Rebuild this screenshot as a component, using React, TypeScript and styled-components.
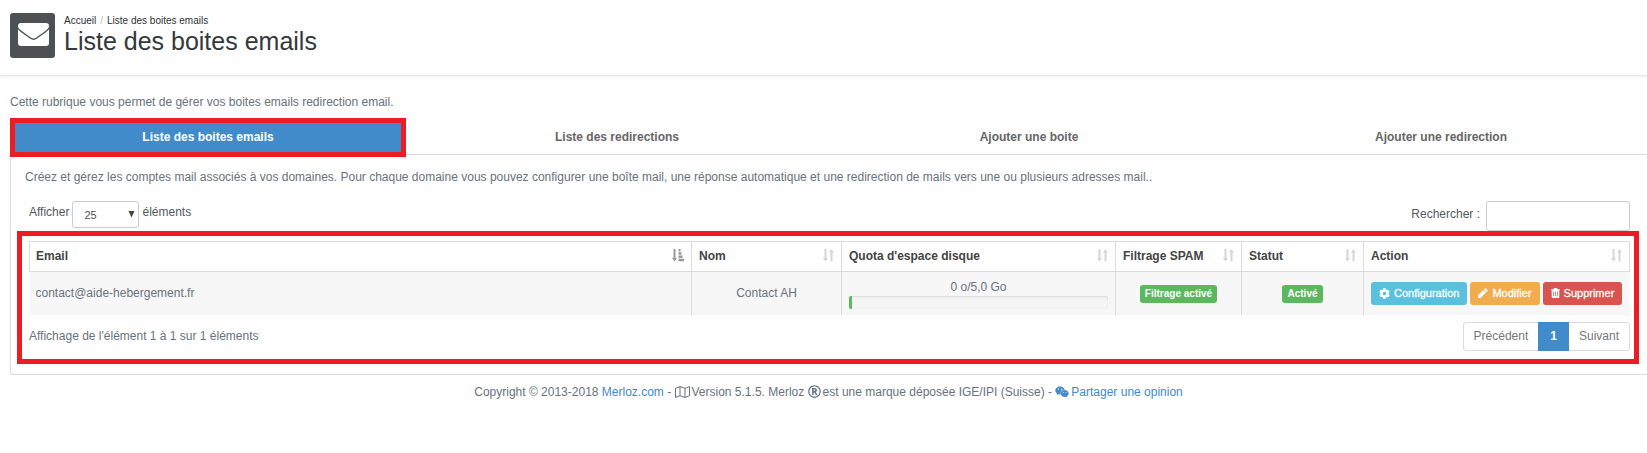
import React from "react";
import styled, { createGlobalStyle } from "styled-components";
import { FaCog, FaWeixin, FaRegRegistered } from "react-icons/fa";

const GlobalStyle = createGlobalStyle`
  * { box-sizing: border-box; }
  body {
    margin: 0;
    background: #fefefe;
    color: #69737c;
    font: 12px/18px "Liberation Sans", Arial, sans-serif;
    overflow-x: hidden;
  }
  p, h1 { margin: 0; }
  input, select, button { font-family: inherit; }
  a { color: #428bca; text-decoration: none; }
`;

const Header = styled.header`
  display: flex;
  gap: 9px;
  height: 76px;
  padding: 13px 10px 0;
  border-bottom: 1px solid #e6e8e9;
  box-shadow: 0 1px 2px #f0f0f0;
`;

const HeaderIcon = styled.div`
  width: 45px;
  height: 45px;
  border-radius: 3px;
  background: #4d5154;
`;

const Breadcrumb = styled.nav`
  display: flex;
  gap: 4px;
  font-size: 10px;
  line-height: 16px;
  color: #bbb;
  a, span { color: #2f3336; }
`;

const Title = styled.h1`
  font-size: 25px;
  line-height: 24px;
  font-weight: 400;
  color: #34383c;
`;

const Main = styled.main`
  padding: 17px 0 0 10px;
`;

const Tabs = styled.div`
  display: grid;
  grid-template-columns: 401fr 412fr 412fr 412fr;
  height: 37px;
  margin-top: 7px;
  border-bottom: 1px solid #ddd;
`;

const Tab = styled.button<{ $active?: boolean }>`
  height: ${(p) => (p.$active ? "39px" : "36px")};
  margin-right: ${(p) => (p.$active ? "5px" : "0")};
  padding: ${(p) => (p.$active ? "0 0 2px" : "2px 0 0")};
  border: ${(p) => (p.$active ? "5px solid #ec1c24" : "0")};
  background: ${(p) => (p.$active ? "#428bca" : "transparent")};
  color: ${(p) => (p.$active ? "#fff" : "#666")};
  font-size: 12px;
  font-weight: 700;
`;

const Panel = styled.section`
  padding: 13px 0 10px 6px;
  border: solid #ddd;
  border-width: 0 0 1px 1px;
  border-radius: 0 0 0 3px;
`;

const Intro = styled.p`
  padding-left: 8px;
`;

const Controls = styled.div`
  display: flex;
  justify-content: space-between;
  align-items: flex-start;
  height: 45px;
  padding: 15px 17px 0 12px;
  color: #555a60;
`;

const Field = styled.label`
  display: flex;
  gap: 3px;
  line-height: 22px;
`;

const SearchField = styled(Field)`
  gap: 6px;
  line-height: 26px;
`;

const SelectBox = styled.span`
  position: relative;
  height: 27px;
  svg {
    position: absolute;
    right: 4px;
    top: 10px;
    pointer-events: none;
  }
`;

const Select = styled.select`
  display: block;
  appearance: none;
  width: 67px;
  height: 27px;
  padding: 0 11px;
  border: 1px solid #ccc;
  border-radius: 3px;
  background: #fff;
  color: #555;
  font-size: 11px;
`;

const SearchInput = styled.input`
  width: 144px;
  height: 30px;
  border: 1px solid #ccc;
  border-radius: 3px;
  background: #fff;
`;

const Highlight = styled.div`
  margin-right: 8px;
  padding: 5px 4px 8px 7px;
  border: 5px solid #ec1c24;
`;

const Table = styled.table`
  width: 100%;
  table-layout: fixed;
  border-collapse: collapse;
`;

const Th = styled.th`
  height: 30px;
  padding: 0 7px 2px 7px;
  border: 1px solid #ddd;
  color: #444;
  text-align: left;
  &:first-child { padding-left: 6px; }
`;

const ThInner = styled.div`
  display: flex;
  align-items: center;
  justify-content: space-between;
`;

const Td = styled.td<{ $left?: boolean }>`
  height: 43px;
  padding: 0 7px;
  background: #f7f7f7;
  text-align: ${(p) => (p.$left ? "left" : "center")};
  & + & { border-left: 1px solid #ddd; }
  &:first-child { padding-left: 6px; }
`;

const Track = styled.div`
  height: 13px;
  border-radius: 2px;
  background: #f5f5f5;
  box-shadow: inset 0 1px 2px rgba(0, 0, 0, 0.12);
`;

const Fill = styled.div`
  width: 3px;
  height: 13px;
  border-radius: 2px 0 0 2px;
  background: #5cb85c;
`;

const Badge = styled.span`
  display: inline-block;
  padding: 0 5px;
  border-radius: 3px;
  background: #5cb85c;
  color: #fff;
  font-size: 10px;
  font-weight: 700;
  line-height: 18px;
`;

const Actions = styled.div`
  display: flex;
  gap: 3px;
`;

const ActionButton = styled.button<{ $bg: string }>`
  display: flex;
  align-items: center;
  justify-content: center;
  gap: 4px;
  height: 23px;
  padding: 0 8px;
  border: 0;
  border-radius: 3px;
  background: ${(p) => p.$bg};
  color: #fff;
  font-size: 11px;
  white-space: nowrap;
  -webkit-text-stroke: 0.3px #fff;
`;

const TableFooter = styled.div`
  display: flex;
  justify-content: space-between;
  padding-top: 7px;
  line-height: 28px;
`;

const Pager = styled.nav`
  display: flex;
  height: 29px;
`;

const PageButton = styled.button<{ $active?: boolean }>`
  padding: 0 ${(p) => (p.$active ? "11px" : "10px")};
  border: 1px solid ${(p) => (p.$active ? "#428bca" : "#ddd")};
  background: ${(p) => (p.$active ? "#428bca" : "#fff")};
  color: ${(p) => (p.$active ? "#fff" : "#777")};
  font-size: 12px;
  font-weight: ${(p) => (p.$active ? 700 : 400)};
  &:first-child { border-right: 0; border-radius: 3px 0 0 3px; }
  &:last-child { border-left: 0; border-radius: 0 3px 3px 0; }
`;

const Footer = styled.footer`
  display: flex;
  justify-content: center;
  align-items: center;
  padding-top: 8px;
  white-space: pre;
  svg { margin-right: 2px; }
`;

const EnvelopeIcon = () => (
  <svg width="45" height="45" viewBox="0 0 45 45">
    <rect x="8" y="10" width="31" height="23" rx="3" fill="#fff" />
    <path
      d="M7.500 14.500Q9 17 11.500 18.700L20 24.700Q22.300 26.300 23.500 26.300T27 24.700L35.500 18.700Q38 17 39.500 14.500"
      fill="none"
      stroke="#4d5154"
      strokeWidth="1.4"
    />
  </svg>
);

const SortIcon = () => (
  <svg width="11" height="13" viewBox="0 0 11 13" fill="#d6d6d6">
    <path d="M1.500 0H3.500V9H5.200L2.500 12.500L0 9H1.500ZM7.500 12.500H9.500V3.500H11L8.500 0L6 3.500H7.500Z" />
  </svg>
);

const SortAscIcon = () => (
  <svg width="12" height="13" viewBox="0 0 12 13" fill="#999">
    <path d="M1.500 0H3.500V9H5L2.500 12.500L0 9H1.500ZM6.500 0H8.500V2.500H6.500ZM6.500 3.300H9.500V5.800H6.500ZM6.500 6.600H10.500V9H6.500ZM6.500 9.800H12V12.300H6.500Z" />
  </svg>
);

const PencilIcon = () => (
  <svg width="10" height="10" viewBox="0 0 10 10" fill="#fff">
    <path d="M6.800.6Q7.400 0 8 .6L9.400 2Q10 2.600 9.400 3.200L8.500 4.100L5.900 1.500ZM5.400 2L8 4.600L2.700 9.900H.1V7.300Z" />
  </svg>
);

const TrashIcon = () => (
  <svg width="9" height="10" viewBox="0 0 9 10" fill="#fff">
    <path
      fillRule="evenodd"
      d="M3 0H6L6.500 1.200H9V2.200H8.300V9Q8.300 10 7.300 10H1.700Q.7 10 .7 9V2.200H0V1.200H2.500ZM2.200 3.500V8.300H2.900V3.500ZM4.200 3.500V8.300H4.900V3.500ZM6.200 3.500V8.300H6.900V3.500Z"
    />
  </svg>
);

const MapIcon = () => (
  <svg width="15" height="12" viewBox="0 0 15 12" fill="none" stroke="#69737c">
    <path d="M.5 2.300L5 .6L10 2.300L14.500.6V9.700L10 11.400L5 9.700L.5 11.400ZM5 .6V9.700M10 2.300V11.400" />
  </svg>
);

const columns: { label: string; width?: number }[] = [
  { label: "Email" },
  { label: "Nom", width: 150 },
  { label: "Quota d'espace disque", width: 274 },
  { label: "Filtrage SPAM", width: 126 },
  { label: "Statut", width: 122 },
  { label: "Action", width: 266 },
];

export default function App() {
  return (
    <>
      <GlobalStyle />
      <Header>
        <HeaderIcon>
          <EnvelopeIcon />
        </HeaderIcon>
        <div>
          <Breadcrumb>
            <a href="#accueil">Accueil</a>/<span>Liste des boites emails</span>
          </Breadcrumb>
          <Title>Liste des boites emails</Title>
        </div>
      </Header>
      <Main>
        <p>Cette rubrique vous permet de gérer vos boites emails redirection email.</p>
        <Tabs>
          <Tab $active>Liste des boites emails</Tab>
          <Tab>Liste des redirections</Tab>
          <Tab>Ajouter une boite</Tab>
          <Tab>Ajouter une redirection</Tab>
        </Tabs>
        <Panel>
          <Intro>
            Créez et gérez les comptes mail associés à vos domaines. Pour chaque domaine vous pouvez configurer une
            boîte mail, une réponse automatique et une redirection de mails vers une ou plusieurs adresses mail..
          </Intro>
          <Controls>
            <Field>
              Afficher
              <SelectBox>
                <Select defaultValue="25">
                  <option>10</option>
                  <option>25</option>
                  <option>50</option>
                </Select>
                <svg width="7" height="7" viewBox="0 0 7 7" fill="#444">
                  <path d="M.5 0H6.500L3.500 6.500Z" />
                </svg>
              </SelectBox>
              éléments
            </Field>
            <SearchField>
              Rechercher :
              <SearchInput type="search" />
            </SearchField>
          </Controls>
          <Highlight>
            <Table>
              <colgroup>
                {columns.map((c) => (
                  <col key={c.label} width={c.width} />
                ))}
              </colgroup>
              <thead>
                <tr>
                  {columns.map((c, i) => (
                    <Th key={c.label}>
                      <ThInner>
                        {c.label}
                        {i === 0 ? <SortAscIcon /> : <SortIcon />}
                      </ThInner>
                    </Th>
                  ))}
                </tr>
              </thead>
              <tbody>
                <tr>
                  <Td $left>contact@aide-hebergement.fr</Td>
                  <Td>Contact AH</Td>
                  <Td>
                    0 o/5,0 Go
                    <Track>
                      <Fill />
                    </Track>
                  </Td>
                  <Td>
                    <Badge>Filtrage activé</Badge>
                  </Td>
                  <Td>
                    <Badge>Activé</Badge>
                  </Td>
                  <Td>
                    <Actions>
                      <ActionButton $bg="#5bc0de">
                        <FaCog size={11} />
                        Configuration
                      </ActionButton>
                      <ActionButton $bg="#f0ad4e">
                        <PencilIcon />
                        Modifier
                      </ActionButton>
                      <ActionButton $bg="#d9534f">
                        <TrashIcon />
                        Supprimer
                      </ActionButton>
                    </Actions>
                  </Td>
                </tr>
              </tbody>
            </Table>
            <TableFooter>
              <span>Affichage de l'élément 1 à 1 sur 1 éléments</span>
              <Pager>
                <PageButton>Précédent</PageButton>
                <PageButton $active>1</PageButton>
                <PageButton>Suivant</PageButton>
              </Pager>
            </TableFooter>
          </Highlight>
        </Panel>
        <Footer>
          Copyright © 2013-2018 <a href="#merloz">Merloz.com</a> - <MapIcon />
          Version 5.1.5. Merloz <FaRegRegistered size={13} />
          est une marque déposée IGE/IPI (Suisse) - <FaWeixin size={14} color="#428bca" />
          <a href="#opinion">Partager une opinion</a>
        </Footer>
      </Main>
    </>
  );
}
